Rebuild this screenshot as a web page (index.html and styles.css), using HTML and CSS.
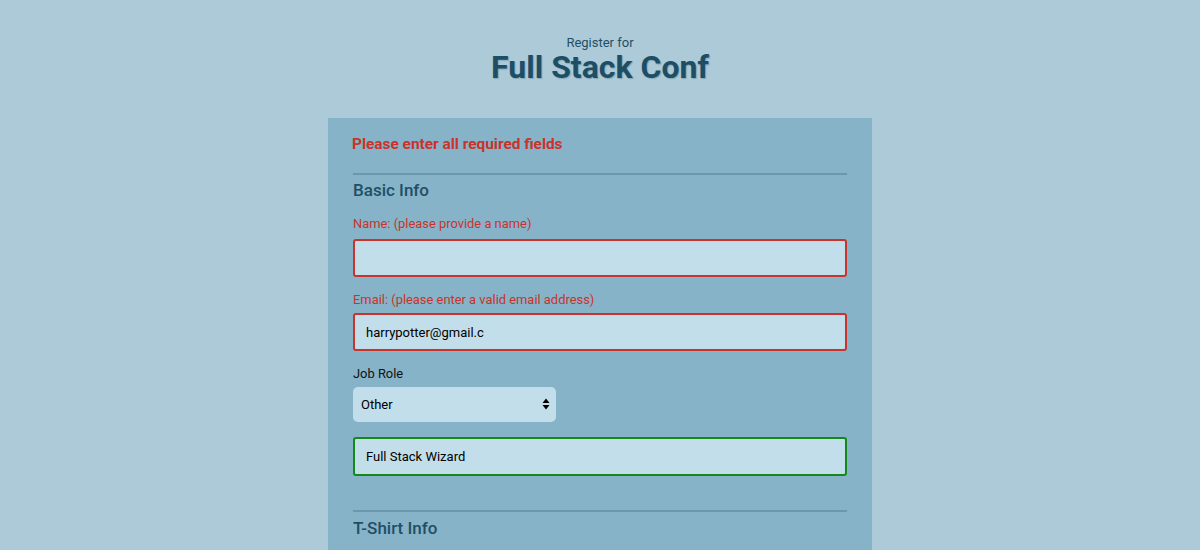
FILE: index.html
```html
<!DOCTYPE html>
<html lang="en">
<head>
<meta charset="utf-8">
<title>Register for Full Stack Conf</title>
<link rel="stylesheet" href="styles.css">
</head>
<body>
<header class="header">
  <p class="pre-title">Register for</p>
  <h1 class="title">Full Stack Conf</h1>
</header>
<main class="card">
  <p class="error-msg">Please enter all required fields</p>
  <section class="fieldset">
    <h2 class="legend">Basic Info</h2>
    <div class="field">
      <label class="label label-error">Name: (please provide a name)</label>
      <input class="input input-error" type="text" value="">
    </div>
    <div class="field">
      <label class="label label-error">Email: (please enter a valid email address)</label>
      <input class="input input-error" type="text" value="harrypotter@gmail.c">
    </div>
    <div class="field field-select">
      <label class="label">Job Role</label>
      <div class="select-wrap">
        <select class="select">
          <option>Other</option>
        </select>
        <svg class="select-arrows" width="8" height="12" viewBox="0 0 8 12"><path d="M4 0.5 L7.5 5 L0.5 5 Z M4 11.5 L7.5 7 L0.5 7 Z" fill="#000"/></svg>
      </div>
    </div>
    <div class="field field-last">
      <input class="input input-valid" type="text" value="Full Stack Wizard">
    </div>
  </section>
  <section class="fieldset">
    <h2 class="legend">T-Shirt Info</h2>
  </section>
</main>
</body>
</html>
```
FILE: styles.css
```css
* { box-sizing: border-box; }
html, body { margin: 0; padding: 0; }
body {
  background: #adcad8;
  font-family: Roboto, "Noto Sans", sans-serif;
  height: 550px;
  overflow: hidden;
}
.header {
  text-align: center;
  padding-top: 35px;
  height: 118px;
}
.pre-title {
  margin: 0;
  font-size: 13px;
  line-height: 15px;
  color: #1f4f66;
}
.title {
  margin: 0;
  font-size: 32px;
  line-height: 34px;
  font-weight: 700;
  color: #1c4e66;
  text-shadow: 1px 1px 1px rgba(10, 40, 60, 0.22);
}
.card {
  width: 544px;
  margin: 0 auto;
  background: #86b3c8;
  padding: 17px 25px 40px;
  min-height: 432px;
}
.error-msg {
  margin: 0 0 0 -1px;
  font-size: 15.4px;
  line-height: 19px;
  font-weight: 700;
  color: #c8332c;
}
.fieldset {
  border-top: 2px solid #6a98b0;
  margin-top: 19px;
}
.fieldset + .fieldset { margin-top: 34px; }
.legend {
  margin: 5px 0 16px;
  font-size: 17px;
  line-height: 20px;
  font-weight: 500;
  color: #1f4f66;
}
.fieldset + .fieldset .legend { margin-top: 6px; }
.field {
  margin-bottom: 14px;
}
.field + .field .label { position: relative; top: 1px; }
.field-select { margin-bottom: 15px; }
.label {
  display: block;
  font-size: 12.9px;
  line-height: 16px;
  color: #111;
  margin-bottom: 7px;
}
.field + .field .label { margin-bottom: 6px; }
.label-error { color: #c8332c; }
.input {
  display: block;
  width: 100%;
  height: 38px;
  padding: 0 11px;
  background: #c1deea;
  border: 2px solid #c1deea;
  border-radius: 3px;
  font-family: Roboto, "Noto Sans", sans-serif;
  font-size: 13px;
  color: #000;
  outline: none;
}
.input-error { border-color: #c8332c; }
.input-valid { border-color: #13891a; height: 39px; }
.select-wrap {
  position: relative;
  width: 203px;
}
.select {
  display: block;
  width: 203px;
  height: 35px;
  padding: 0 8px;
  background: #c1deea;
  border: none;
  border-radius: 5px;
  font-family: Roboto, "Noto Sans", sans-serif;
  font-size: 13px;
  color: #000;
  appearance: none;
  -webkit-appearance: none;
  outline: none;
}
.select-arrows {
  position: absolute;
  right: 6px;
  top: 11px;
  pointer-events: none;
}
```
